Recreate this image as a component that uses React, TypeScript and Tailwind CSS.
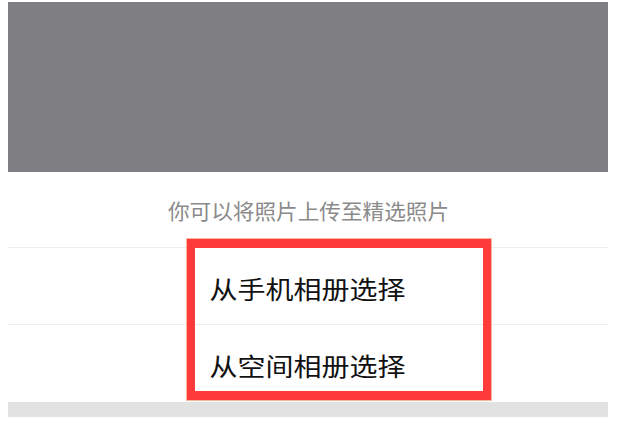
import React from 'react'

const FONT = { fontFamily: '"Noto Sans CJK SC", "Noto Sans", sans-serif' }

const OPTIONS = ['从手机相册选择', '从空间相册选择']

export default function App() {
  return (
    <div className="relative w-[636px] h-[443px] bg-white overflow-hidden" style={FONT}>
      <div className="ml-[8px] w-[600px] flex flex-col pt-[2px]">
        {/* dimmed page behind the sheet */}
        <div className="h-[170px] bg-[#7f7e83]" />

        {/* action sheet */}
        <div className="h-[76px] flex items-center justify-center border-b border-[#ececec]">
          <span className="inline-block text-[21px] scale-x-[1.03] text-[#8a8a8a] leading-none mt-[2px]">
            你可以将照片上传至精选照片
          </span>
        </div>
        {OPTIONS.map((label, i) => (
          <div
            key={label}
            className={`h-[77px] flex items-center justify-center ${i === 0 ? 'border-b border-[#ececec]' : ''}`}
          >
            <span className="inline-block text-[25px] scale-x-[1.12] text-[#111] leading-none mt-[4px]">{label}</span>
          </div>
        ))}
        <div className="h-[15px] bg-[#e2e2e2]" />
      </div>

      {/* red highlight frame */}
      <div className="absolute left-[187px] top-[239px] w-[304px] h-[161px] border-[9px] border-x-[8px] border-[#ff3a3a] ring-1 ring-[#f08a5d]/60" />
    </div>
  )
}
